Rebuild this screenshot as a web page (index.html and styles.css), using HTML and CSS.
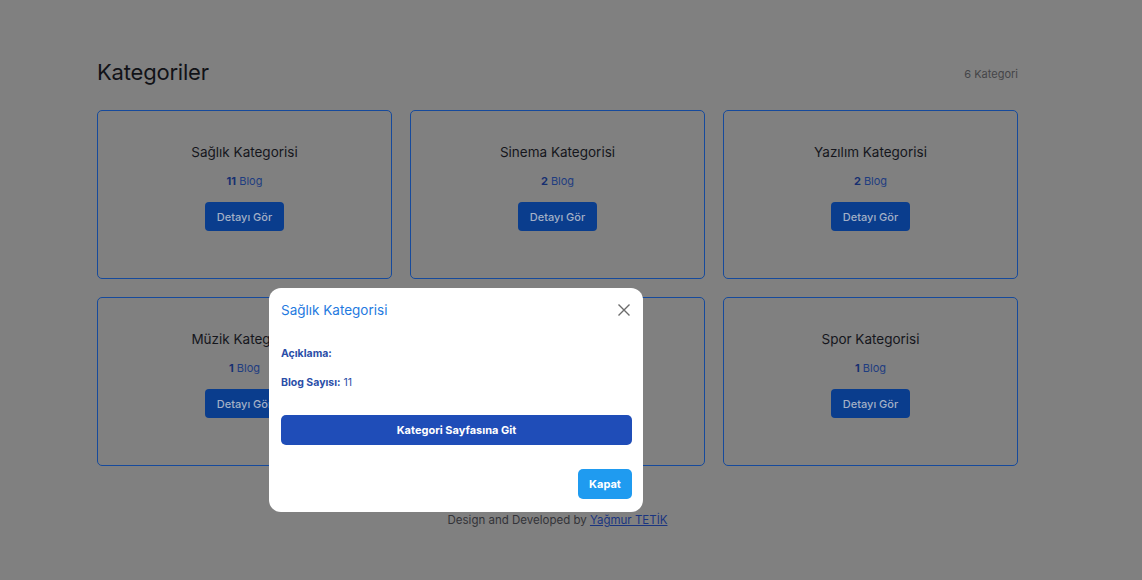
FILE: index.html
```html
<!DOCTYPE html>
<html lang="tr">
<head>
<meta charset="utf-8">
<title>Kategoriler</title>
<link rel="stylesheet" href="styles.css">
</head>
<body>
<main class="page">
  <div class="head">
    <h1 class="title">Kategoriler</h1>
    <span class="count">6 Kategori</span>
  </div>
  <div class="grid">
    <div class="card"><h2 class="card-title">Sağlık Kategorisi</h2><p class="card-num"><b>11</b> Blog</p><span class="btn-detail">Detayı Gör</span></div>
    <div class="card"><h2 class="card-title">Sinema Kategorisi</h2><p class="card-num"><b>2</b> Blog</p><span class="btn-detail">Detayı Gör</span></div>
    <div class="card"><h2 class="card-title">Yazılım Kategorisi</h2><p class="card-num"><b>2</b> Blog</p><span class="btn-detail">Detayı Gör</span></div>
    <div class="card"><h2 class="card-title">Müzik Kategorisi</h2><p class="card-num"><b>1</b> Blog</p><span class="btn-detail">Detayı Gör</span></div>
    <div class="card"><h2 class="card-title">Kitap Kategorisi</h2><p class="card-num"><b>1</b> Blog</p><span class="btn-detail">Detayı Gör</span></div>
    <div class="card"><h2 class="card-title">Spor Kategorisi</h2><p class="card-num"><b>1</b> Blog</p><span class="btn-detail">Detayı Gör</span></div>
  </div>
  <footer class="foot">Design and Developed by <a href="#">Yağmur TETİK</a></footer>
</main>

<div class="modal">
  <div class="modal-head">
    <h3 class="modal-title">Sağlık Kategorisi</h3>
    <svg class="close" width="14" height="14" viewBox="0 0 14 14"><path d="M1.5 1.5 L12.5 12.5 M12.5 1.5 L1.5 12.5" stroke="#6b6b6b" stroke-width="1.4" fill="none"/></svg>
  </div>
  <div class="modal-body">
    <p class="line"><b>Açıklama:</b></p>
    <p class="line"><b>Blog Sayısı:</b> 11</p>
    <span class="btn-go">Kategori Sayfasına Git</span>
  </div>
  <div class="modal-foot">
    <span class="btn-close">Kapat</span>
  </div>
</div>
</body>
</html>
```

FILE: styles.css
```css
* { box-sizing: border-box; }
html, body { margin: 0; padding: 0; }
body {
  background: #808080;
  font-family: "Inter", "Open Sans", sans-serif;
  padding-right: 27px;
  height: 580px;
  overflow: hidden;
}
.page {
  width: 921px;
  margin: 0 auto;
  padding-top: 57px;
}
.head {
  display: flex;
  justify-content: space-between;
  align-items: center;
  height: 30px;
}
.title {
  margin: 0;
  font-size: 22px;
  font-weight: 400;
  color: #111217;
  letter-spacing: -0.2px;
}
.count {
  font-size: 11px;
  color: #454548;
  padding-top: 4px;
}
.grid {
  display: grid;
  grid-template-columns: repeat(3, 295px);
  column-gap: 18px;
  row-gap: 18px;
  margin-top: 23px;
}
.card {
  height: 169px;
  border: 1px solid #164a9c;
  border-radius: 5px;
  display: flex;
  flex-direction: column;
  align-items: center;
  padding-top: 32px;
}
.card-title {
  margin: 0;
  font-size: 13.5px;
  font-weight: 400;
  color: #15161c;
  line-height: 18px;
}
.card-num {
  margin: 12px 0 0;
  font-size: 11px;
  line-height: 16px;
  color: #1e3d80;
}
.card-num b { font-weight: 700; color: #162f70; }
.btn-detail {
  margin-top: 13px;
  width: 79px;
  height: 29px;
  border-radius: 4px;
  background: #0a3d8d;
  color: #a3b0c6;
  font-size: 11px;
  font-weight: 500;
  display: flex;
  align-items: center;
  justify-content: center;
}
.foot {
  margin-top: 47px;
  text-align: center;
  font-size: 11.5px;
  color: #333338;
}
.foot a { color: #1a3580; }

.modal {
  position: fixed;
  left: 269px;
  top: 288px;
  width: 374px;
  height: 224px;
  background: #fff;
  border-radius: 12px;
  padding: 0 11px 0 12px;
}
.modal-head {
  display: flex;
  justify-content: space-between;
  align-items: center;
  height: 44px;
}
.modal-title {
  margin: 0;
  font-size: 13.5px;
  font-weight: 400;
  color: #1f7ae0;
}
.close { margin-right: 1px; }
.modal-body {
  padding-top: 14px;
}
.line {
  margin: 0 0 14px;
  font-size: 10.5px;
  line-height: 15px;
  color: #2b4ea8;
}
.line b { font-weight: 700; }
.btn-go {
  margin-top: 25px;
  display: flex;
  align-items: center;
  justify-content: center;
  height: 30px;
  border-radius: 5px;
  background: #1f4db8;
  color: #fff;
  font-size: 11px;
  font-weight: 700;
}
.modal-foot {
  display: flex;
  justify-content: flex-end;
  padding-top: 24px;
}
.btn-close {
  width: 54px;
  height: 30px;
  border-radius: 5px;
  background: #1f9bf0;
  color: #fff;
  font-size: 11px;
  font-weight: 700;
  display: flex;
  align-items: center;
  justify-content: center;
}
```
